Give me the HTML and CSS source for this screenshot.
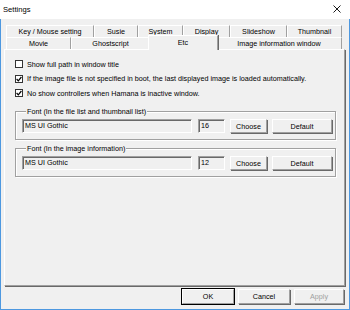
FILE: index.html
```html
<!DOCTYPE html>
<html lang="en">
<head>
  <meta charset="UTF-8">
  <title>Settings</title>
  <link rel="stylesheet" href="styles.css">
</head>
<body>
  <div class="window">
    <div class="titlebar">
      <span class="title">Settings</span>
      <svg class="close" width="8" height="8" viewBox="0 0 8 8"><path d="M0.5 0.5 L7.5 7.5 M7.5 0.5 L0.5 7.5" stroke="#000" stroke-width="0.9" fill="none"/></svg>
    </div>

    <div class="tabs">
      <div class="tab-row row-top">
        <div class="tab">Key / Mouse setting</div>
        <div class="tab">Susie</div>
        <div class="tab">System</div>
        <div class="tab">Display</div>
        <div class="tab">Slideshow</div>
        <div class="tab">Thumbnail</div>
      </div>
      <div class="tab-row row-bottom">
        <div class="tab">Movie</div>
        <div class="tab">Ghostscript</div>
        <div class="tab selected">Etc</div>
        <div class="tab">Image information window</div>
      </div>
    </div>

    <div class="panel">
      <div class="check"><span class="box"></span>Show full path in window title</div>
      <div class="check"><span class="box checked"><svg width="6" height="6" viewBox="0 0 6 6"><path d="M0.6 3 L2.3 4.8 L5.4 1" stroke="#000" stroke-width="1.2" fill="none"/></svg></span>If the image file is not specified in boot, the last displayed image is loaded automatically.</div>
      <div class="check"><span class="box checked"><svg width="6" height="6" viewBox="0 0 6 6"><path d="M0.6 3 L2.3 4.8 L5.4 1" stroke="#000" stroke-width="1.2" fill="none"/></svg></span>No show controllers when Hamana is inactive window.</div>

      <fieldset class="group">
        <legend>Font (In the file list and thumbnail list)</legend>
        <div class="font-row">
          <div class="field name">MS UI Gothic</div>
          <div class="field size">16</div>
          <button class="btn choose">Choose</button>
          <button class="btn reset">Default</button>
        </div>
      </fieldset>

      <fieldset class="group">
        <legend>Font (In the image information)</legend>
        <div class="font-row">
          <div class="field name">MS UI Gothic</div>
          <div class="field size">12</div>
          <button class="btn choose">Choose</button>
          <button class="btn reset">Default</button>
        </div>
      </fieldset>
    </div>

    <div class="actions">
      <button class="btn action default">OK</button>
      <button class="btn action">Cancel</button>
      <button class="btn action disabled">Apply</button>
    </div>
  </div>
</body>
</html>
```

FILE: styles.css
```css
body {
  margin: 0;
  padding: 0;
  font-family: "Liberation Sans", Arial, sans-serif;
  font-size: 7.2px;
  color: #000;
  background: #fff;
}

.window {
  box-sizing: border-box;
  width: 350px;
  height: 310px;
  background: #f0f0f0;
  border: 1px solid #4d98e0;
  border-top: none;
  display: flex;
  flex-direction: column;
}

.titlebar {
  height: 18px;
  margin: 0 -1px;
  background: #ffffff;
  display: flex;
  align-items: center;
  justify-content: space-between;
  padding: 0 9px 1px 3px;
}

.title {
  font-size: 7.6px;
}

.tabs {
  padding: 6px 0 0 5px;
}

.tab-row {
  display: grid;
  height: 12px;
}

.row-top {
  grid-template-columns: 88px 44px 45px 47px 57px 55px;
}

.row-bottom {
  grid-template-columns: 65px 79px 66px 126px;
}

.tab {
  box-sizing: border-box;
  border-top: 1px solid #ffffff;
  border-left: 1px solid #ffffff;
  border-right: 1px solid #a0a0a0;
  display: flex;
  align-items: center;
  justify-content: center;
  white-space: nowrap;
  background: #f0f0f0;
}

.tab.selected {
  margin: -2px -2px -1px -2px;
  z-index: 1;
  padding-bottom: 2px;
  box-shadow: 1px 0 0 #696969;
}

.panel {
  box-sizing: border-box;
  height: 237px;
  margin: 0 4px 0 3px;
  border-top: 1px solid #ffffff;
  border-left: 1px solid #ffffff;
  border-right: 1px solid #a0a0a0;
  border-bottom: 1px solid #a0a0a0;
  box-shadow: 1px 1px 0 #696969;
  padding: 7px 8px 0 10px;
}

.check {
  height: 14.5px;
  display: flex;
  align-items: center;
  white-space: nowrap;
}

.box {
  box-sizing: border-box;
  width: 8px;
  height: 8px;
  border: 1px solid #333333;
  background: #ffffff;
  margin-right: 4px;
  display: flex;
  align-items: center;
  justify-content: center;
  flex-shrink: 0;
}

.group {
  margin: 6px 0 0 0;
  padding: 3px 2px 5px 6px;
  border: 1px solid #a0a0a0;
  box-shadow: inset 1px 1px 0 #ffffff, 1px 1px 0 #ffffff;
  min-width: 0;
}

.group + .group {
  margin-top: 4px;
}

.group legend {
  padding: 0 1px;
  margin-left: 4px;
  line-height: 9px;
  background: #f0f0f0;
}

.font-row {
  display: flex;
  align-items: center;
  height: 15px;
}

.field {
  box-sizing: border-box;
  height: 14px;
  border-top: 1px solid #a0a0a0;
  border-left: 1px solid #a0a0a0;
  border-right: 1px solid #ffffff;
  border-bottom: 1px solid #ffffff;
  box-shadow: inset 1px 1px 0 #696969;
  padding: 1px 0 0 2px;
  line-height: 10px;
  background: #f0f0f0;
}

.field.name {
  width: 170px;
  margin-right: 6px;
}

.field.size {
  width: 27px;
  margin-right: 5px;
}

.btn {
  box-sizing: border-box;
  height: 14px;
  padding: 0;
  font-family: inherit;
  font-size: inherit;
  color: #000;
  background: #f0f0f0;
  border-top: 1px solid #ffffff;
  border-left: 1px solid #ffffff;
  border-right: 1px solid #a0a0a0;
  border-bottom: 1px solid #a0a0a0;
  box-shadow: 1px 1px 0 #696969;
}

.btn.choose {
  width: 37px;
  margin-right: 5px;
}

.btn.reset {
  width: 60px;
}

.actions {
  display: flex;
  justify-content: flex-end;
  gap: 4px;
  padding: 3px 5px 0 0;
}

.btn.action {
  width: 52px;
  height: 15px;
}

.btn.action.disabled {
  width: 50px;
  color: #a0a0a0;
}

.btn.default {
  outline: 1px solid #000000;
  outline-offset: 0;
}
```
